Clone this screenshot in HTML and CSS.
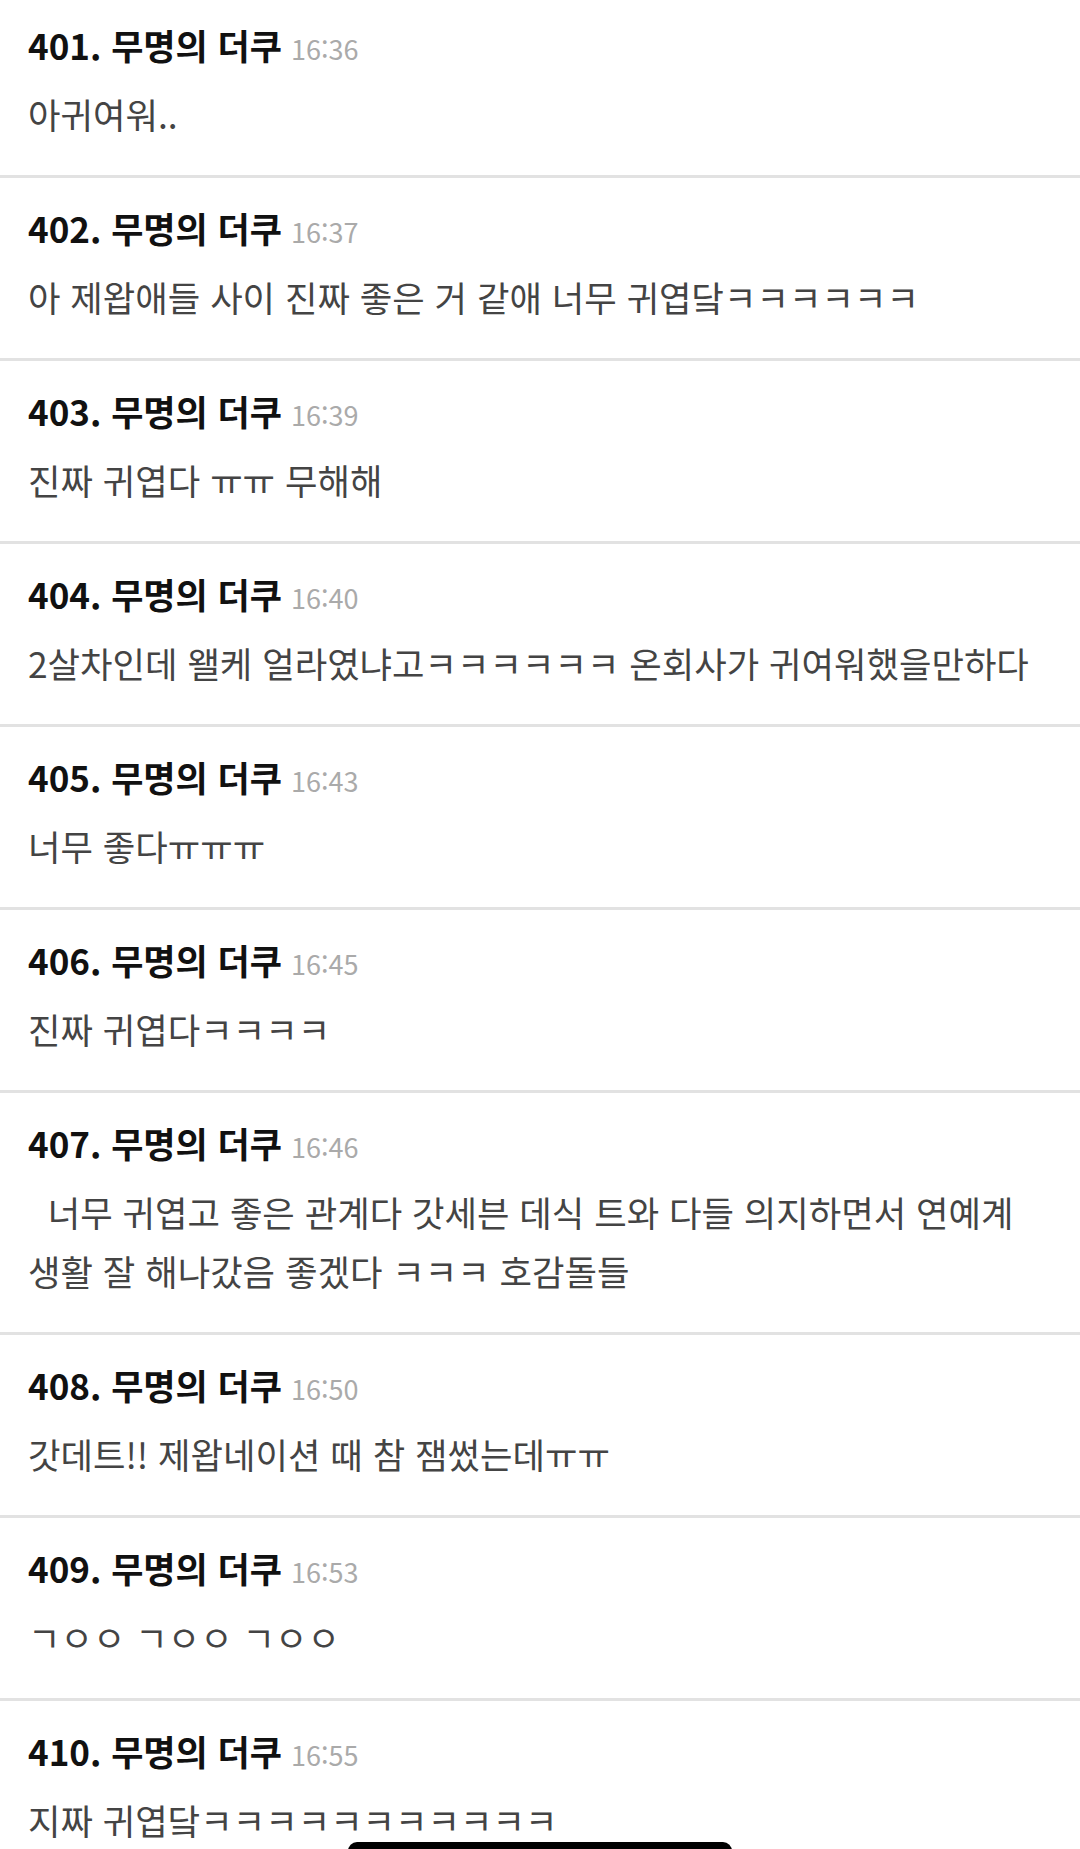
FILE: index.html
```html
<!DOCTYPE html>
<html lang="ko">
<head>
    <meta charset="UTF-8">
    <meta name="viewport" content="width=device-width, initial-scale=1.0">
    <title>무명의 더쿠 - 댓글</title>
    <link rel="stylesheet" href="styles.css">
</head>
<body>
    <div class="thread">
        <div class="comment">
            <div class="comment-head"><span class="comment-name">401. 무명의 더쿠</span><span class="comment-time">16:36</span></div>
            <p class="comment-body">아귀여워..</p>
        </div>

        <div class="comment">
            <div class="comment-head"><span class="comment-name">402. 무명의 더쿠</span><span class="comment-time">16:37</span></div>
            <p class="comment-body">아 제왑애들 사이 진짜 좋은 거 같애 너무 귀엽닼ㅋㅋㅋㅋㅋㅋ</p>
        </div>

        <div class="comment">
            <div class="comment-head"><span class="comment-name">403. 무명의 더쿠</span><span class="comment-time">16:39</span></div>
            <p class="comment-body">진짜 귀엽다 ㅠㅠ 무해해</p>
        </div>

        <div class="comment">
            <div class="comment-head"><span class="comment-name">404. 무명의 더쿠</span><span class="comment-time">16:40</span></div>
            <p class="comment-body">2살차인데 왤케 얼라였냐고ㅋㅋㅋㅋㅋㅋ 온회사가 귀여워했을만하다</p>
        </div>

        <div class="comment">
            <div class="comment-head"><span class="comment-name">405. 무명의 더쿠</span><span class="comment-time">16:43</span></div>
            <p class="comment-body">너무 좋다ㅠㅠㅠ</p>
        </div>

        <div class="comment">
            <div class="comment-head"><span class="comment-name">406. 무명의 더쿠</span><span class="comment-time">16:45</span></div>
            <p class="comment-body">진짜 귀엽다ㅋㅋㅋㅋ</p>
        </div>

        <div class="comment">
            <div class="comment-head"><span class="comment-name">407. 무명의 더쿠</span><span class="comment-time">16:46</span></div>
            <p class="comment-body">&nbsp;&nbsp;너무 귀엽고 좋은 관계다 갓세븐 데식 트와 다들 의지하면서 연예계 생활 잘 해나갔음 좋겠다 ㅋㅋㅋ 호감돌들</p>
        </div>

        <div class="comment">
            <div class="comment-head"><span class="comment-name">408. 무명의 더쿠</span><span class="comment-time">16:50</span></div>
            <p class="comment-body">갓데트!! 제왑네이션 때 참 잼썼는데ㅠㅠ</p>
        </div>

        <div class="comment">
            <div class="comment-head"><span class="comment-name">409. 무명의 더쿠</span><span class="comment-time">16:53</span></div>
            <p class="comment-body">ㄱㅇㅇ ㄱㅇㅇ ㄱㅇㅇ</p>
        </div>

        <div class="comment">
            <div class="comment-head"><span class="comment-name">410. 무명의 더쿠</span><span class="comment-time">16:55</span></div>
            <p class="comment-body">지짜 귀엽닼ㅋㅋㅋㅋㅋㅋㅋㅋㅋㅋㅋ</p>
        </div>
    </div>

    <div class="home-bar"></div>
</body>
</html>
```

FILE: styles.css
```css
* {
    margin: 0;
    padding: 0;
    box-sizing: border-box;
}

body {
    font-family: "Noto Sans CJK KR", "Noto Sans", sans-serif;
    background-color: #fff;
    color: #444;
    overflow: hidden;
}

.thread {
    margin-top: -5px;
}

.comment {
    padding: 28px 18px 32px 28px;
    border-bottom: 3px solid #e2e2e2;
}

.comment-head {
    height: 44px;
    line-height: 44px;
    white-space: nowrap;
}

.comment-name {
    font-size: 35px;
    font-weight: bold;
    color: #111;
}

.comment-time {
    margin-left: 9px;
    font-size: 27px;
    color: #aaa;
}

.comment-body {
    margin-top: 17px;
    font-size: 35.3px;
    line-height: 59px;
    color: #444;
    word-break: keep-all;
}

.home-bar {
    position: fixed;
    left: 348px;
    bottom: -12px;
    width: 384px;
    height: 19px;
    background-color: #000;
    border-radius: 9px;
}
```
